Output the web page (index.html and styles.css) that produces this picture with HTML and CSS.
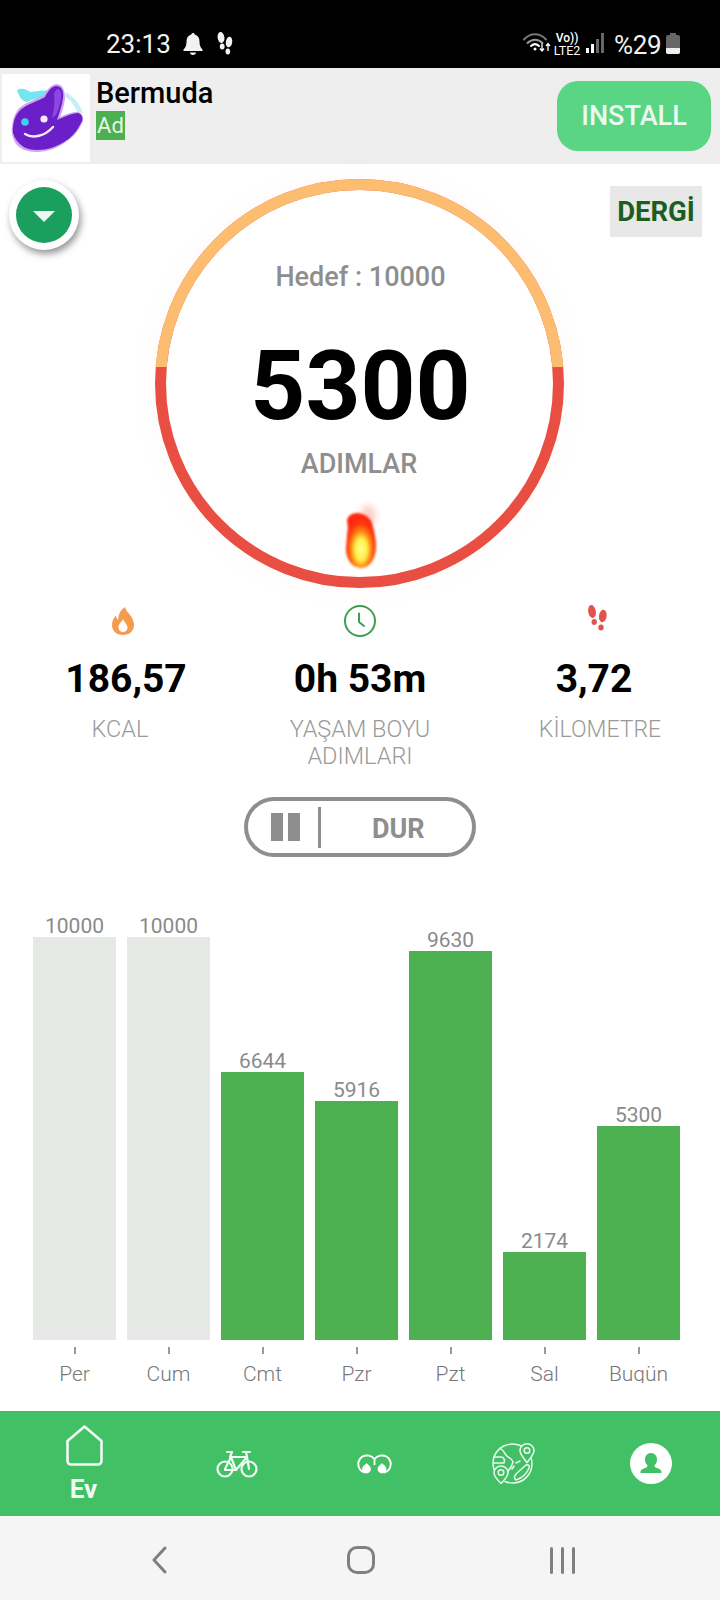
FILE: index.html
```html
<!DOCTYPE html>
<html lang="tr">
<head>
<meta charset="utf-8">
<title>Adımlar</title>
<link rel="stylesheet" href="styles.css">
</head>
<body>
<div class="screen">
  <header class="status">
    <span class="time">23:13</span>
    <svg class="st-bell" width="20" height="22" viewBox="0 0 20 22"><path fill="#f2f2f2" d="M10 0c1 0 1.600.7 1.700 1.600C15 2.400 16.500 5 16.500 8.500c0 4 1 6 3 8v1.500H.5v-1.500c2-2 3-4 3-8C3.500 5 5 2.400 8.300 1.600 8.400.7 9 0 10 0zM7 19.500h6c0 1.500-1.300 2.500-3 2.500s-3-1-3-2.500z"/></svg>
    <svg class="st-feet" width="18" height="23" viewBox="0 0 18 23"><g fill="#f2f2f2"><ellipse cx="5" cy="5.500" rx="3.400" ry="5.500" transform="rotate(-8 5 5.500)"/><ellipse cx="6.200" cy="14.500" rx="2.400" ry="3"/><ellipse cx="13" cy="10" rx="3.200" ry="5.400" transform="rotate(8 13 10)"/><ellipse cx="11.800" cy="19.500" rx="2.300" ry="3"/></g></svg>
    <div class="st-right">
      <svg width="29" height="19" viewBox="0 0 29 19"><g fill="none" stroke-linecap="round"><path d="M1 6.500C7-.5 17-.5 23 6.500" stroke="#777" stroke-width="2"/><path d="M4.500 10c4.500-4.500 10.500-4.500 15 0" stroke="#999" stroke-width="2"/><path d="M8 13c2.500-2.300 5.500-2.300 8 0" stroke="#fff" stroke-width="2"/></g><circle cx="12" cy="16" r="1.500" fill="#fff"/><path d="M19 10.500v7M17 15.500l2 2.500 2-2.500M25 18v-7M23 13l2-2.500 2 2.500" stroke="#fff" stroke-width="1.300" fill="none"/></svg>
      <div class="st-lte"><span class="st-vo">Vo))</span><span class="st-l2">LTE2</span></div>
      <div class="st-signal"><i class="sig s1"></i><i class="sig s2"></i><i class="sig s3"></i><i class="sig s4"></i></div>
      <span class="st-pct">%29</span>
      <div class="st-batt"><i class="st-cap"></i><div class="st-body"><i class="st-level"></i></div></div>
    </div>
  </header>

  <section class="ad">
    <div class="ad-logo">
      <svg width="88" height="88" viewBox="0 0 88 88">
        <path d="M15 16c6-3 9 0 14 2 6-1 14-2 19-1l-4 7c-7 0-13 1-19 4-4 0-8-5-10-12z" fill="#74e6f0"/>
        <path d="M64 18c8 5 14 12 17 21l-6-1c-2-6-6-12-12-15z" fill="#c5f0f6"/>
        <path d="M10 53C11 43 14 36 20 32 27 27 35 25 42 21 45 15 50 10 55 10c7 1 8 8 8 15-1 7-3 13-5 18 6-3 12-5 18-5 4 1 6 5 5 9-4 10-11 17-16 20C56 74 45 78 35 78 25 78 18 75 14 70 11 65 9 59 10 53z" fill="#cfa4f0"/>
        <path d="M11 53C12 44 15 38 21 34 28 29 36 27 43 23 46 17 50 12 54 12 60 12 62 18 61 24 60 32 57 40 55 46 62 43 70 39 76 39 80 40 81 44 80 47 76 56 70 63 65 66 55 73 45 76 35 76 26 76 20 73 16 68 12 63 10 58 11 53z" fill="#6a1fc9"/>
        <path d="M52 20c1-3 2-5 4-5 3 1 4 5 3 10-1 6-3 11-5 16l-4 3c2-8 3-16 2-24z" fill="#8b47e0"/>
        <circle cx="23" cy="48" r="3.800" fill="#3fd0ee"/>
        <circle cx="42" cy="45" r="3.600" fill="#f6e9fb"/>
        <path d="M23 60c8 5 20 2 28-7" fill="none" stroke="#f6e9fb" stroke-width="2.400" stroke-linecap="round"/>
      </svg>
    </div>
    <div class="ad-text">
      <div class="ad-name">Bermuda</div>
      <div class="ad-badge">Ad</div>
    </div>
    <div class="ad-btn">INSTALL</div>
  </section>

  <main class="main">
    <button class="fab"><span class="fab-inner"><i class="fab-tri"></i></span></button>
    <div class="dergi">DERGİ</div>

    <div class="gauge">
      <svg class="ring" width="409" height="409" viewBox="0 0 409 409">
        <defs>
          <clipPath id="topcut"><rect x="0" y="0" width="409" height="188"/></clipPath>
          <radialGradient id="fire" cx="50%" cy="66%" r="58%">
            <stop offset="0" stop-color="#ffff8c"/>
            <stop offset=".34" stop-color="#fff04a"/>
            <stop offset=".56" stop-color="#ff8a14"/>
            <stop offset=".8" stop-color="#ff3a0a"/>
            <stop offset="1" stop-color="#ff2a08"/>
          </radialGradient>
          <filter id="soft" x="-30%" y="-30%" width="160%" height="160%"><feGaussianBlur stdDeviation="1"/></filter>
          <filter id="softer" x="-50%" y="-50%" width="200%" height="200%"><feGaussianBlur stdDeviation="3"/></filter>
        </defs>
        <circle cx="204.500" cy="204.500" r="199" fill="#fff" stroke="#e84f42" stroke-width="11"/>
        <circle cx="204.500" cy="204.500" r="199" fill="none" stroke="#fdbd70" stroke-width="11" clip-path="url(#topcut)"/>
        <ellipse cx="213" cy="337" rx="8" ry="11" fill="#ffb0a0" opacity=".6" filter="url(#softer)"/>
        <path d="M192 356c1-5 1-9 0-14 0-4 4-8 10-8 6 0 13 4 15 10 2 7 4 15 4 23 0 14-7 22-15 22-9 0-15-9-15-19 0-5 1-9 1-14z" fill="url(#fire)" filter="url(#soft)"/>
      </svg>
      <div class="gauge-text">
        <div class="goal">Hedef : 10000</div>
        <div class="count">5300</div>
        <div class="unit">ADIMLAR</div>
      </div>
    </div>

    <div class="stats">
      <div class="stat">
        <div class="stat-icon shift-a">
          <svg width="22" height="28" viewBox="0 0 22 28"><path fill="#f59b50" fill-rule="evenodd" d="M13 0c1 4 3 5 5 8 2.500 3 4 6 4 10 0 6-4.500 10-11 10S0 24 0 18c0-4 1.500-7 4-9.500.2 2.300 1 3.500 2.300 4.300C6 8 8.500 3 13 0zM11 12c-.5 2.500-4.500 4-4.500 8.500 0 2.500 2 4.500 4.500 4.500s4.500-2 4.500-4.500c0-3.500-3.500-5-4.500-8.500z"/></svg>
        </div>
        <div class="stat-val shift-b">186,57</div>
        <div class="stat-lbl">KCAL</div>
      </div>
      <div class="stat">
        <div class="stat-icon">
          <svg width="32" height="32" viewBox="0 0 32 32"><circle cx="16" cy="16" r="15" fill="none" stroke="#3c9f4e" stroke-width="2"/><path d="M15 8.500v8.500l5 4" fill="none" stroke="#3c9f4e" stroke-width="2" stroke-linecap="round" stroke-linejoin="round"/></svg>
        </div>
        <div class="stat-val">0h 53m</div>
        <div class="stat-lbl">YAŞAM BOYU ADIMLARI</div>
      </div>
      <div class="stat">
        <div class="stat-icon shift-c">
          <svg width="19" height="26" viewBox="0 0 19 26"><g fill="#e2544b"><ellipse cx="4" cy="6.500" rx="3.800" ry="6.500" transform="rotate(-10 4 6.500)"/><ellipse cx="6.200" cy="17" rx="2.700" ry="3"/><ellipse cx="14.800" cy="11" rx="3.800" ry="6.200" transform="rotate(8 14.800 11)"/><ellipse cx="13" cy="22.500" rx="2.700" ry="3"/></g></svg>
        </div>
        <div class="stat-val shift-d">3,72</div>
        <div class="stat-lbl stat-lbl-km">KİLOMETRE</div>
      </div>
    </div>

    <div class="pill">
      <i class="pause p1"></i><i class="pause p2"></i>
      <i class="pill-div"></i>
      <span class="pill-text">DUR</span>
    </div>

    <div class="chart">
      <div class="col"><div class="plot"><span class="bar-val">10000</span><div class="bar bar-off" style="height:404px"></div></div><i class="tick"></i><div class="day">Per</div></div>
      <div class="col"><div class="plot"><span class="bar-val">10000</span><div class="bar bar-off" style="height:404px"></div></div><i class="tick"></i><div class="day">Cum</div></div>
      <div class="col"><div class="plot"><span class="bar-val">6644</span><div class="bar" style="height:268px"></div></div><i class="tick"></i><div class="day">Cmt</div></div>
      <div class="col"><div class="plot"><span class="bar-val">5916</span><div class="bar" style="height:239px"></div></div><i class="tick"></i><div class="day">Pzr</div></div>
      <div class="col"><div class="plot"><span class="bar-val">9630</span><div class="bar" style="height:389px"></div></div><i class="tick"></i><div class="day">Pzt</div></div>
      <div class="col"><div class="plot"><span class="bar-val">2174</span><div class="bar" style="height:88px"></div></div><i class="tick"></i><div class="day">Sal</div></div>
      <div class="col"><div class="plot"><span class="bar-val">5300</span><div class="bar" style="height:214px"></div></div><i class="tick"></i><div class="day day-cut">Bugün</div></div>
    </div>
  </main>

  <nav class="tabs">
    <div class="tab tab-home">
      <svg width="37" height="41" viewBox="0 0 37 41"><path d="M18.500 1.500 35.500 16v20c0 2-1.500 3.500-3.500 3.500H5c-2 0-3.500-1.500-3.500-3.500V16z" fill="none" stroke="#f2fbf4" stroke-width="2.600" stroke-linejoin="round"/></svg>
      <span class="tab-label">Ev</span>
    </div>
    <svg class="tab tab-bike" width="42" height="28" viewBox="0 0 42 28"><g fill="none" stroke="#f0faf2" stroke-width="2.200" stroke-linecap="round" stroke-linejoin="round"><circle cx="9" cy="19" r="7.500"/><circle cx="33" cy="19" r="7.500"/><path d="M9 19 15 7h16l2 12M31 7 20 20H9M15 7l5 13M11 2h5l-2 5M27 2h7M30 2l1 5"/></g></svg>
    <svg class="tab tab-binoc" width="35" height="20" viewBox="0 0 35 20"><g fill="none" stroke="#fff" stroke-width="1.900"><path d="M17.500 5C14.500 1.500 9.500.5 5.500 2.500 1 5 0 11 3 15.500c1.200 1.800 3 2.800 5 3"/><path d="M17.500 5c3-3.500 8-4.500 12-2.500C34 5 35 11 32 15.500c-1.200 1.800-3 2.800-5 3"/><path d="M17.500 5v6"/></g><circle cx="9.500" cy="15" r="4.400" fill="#fff"/><circle cx="25" cy="15" r="4.400" fill="#fff"/><path d="M9.500 9l2.500 3h-5zM25 9l2.500 3h-5z" fill="#fff"/></svg>
    <svg class="tab tab-globe" width="43" height="41" viewBox="0 0 43 41"><g fill="none" stroke="#eaf8ee" stroke-width="1.500" stroke-linejoin="round" stroke-linecap="round"><path d="M29 2.800C26 1.400 23.500 1 20.500 1 9.500 1 1 9.500 1 20.500c0 3 .6 5 1.500 7M13 38.500c2.500 1.100 5 1.500 7.500 1.500C31.500 40 40 31.500 40 20.500c0-3-.6-5.500-1.500-7.500"/><path d="M8 5c3 2 4 4 6 7 2 3 6 3 7 7l-2 5-5 7M2 14h7c3 0 4 3 3 6H1.500M24 20l4-2M20 26l2-3M24 37c-3-2-1-5 1-7l9-8c2-1 4 1 3 3-2 5-7 10-13 12z"/><path d="M35 0.800c3.800 0 7 3 7 6.800 0 4-3.500 7.400-7 12-3.500-4.600-7-8-7-12 0-3.800 3.200-6.800 7-6.800z" fill="#42c065"/><circle cx="35" cy="7.500" r="2.800"/><path d="M9 23c3.800 0 7 3 7 6.800 0 4-3.500 6.900-7 10.700-3.500-3.800-7-6.700-7-10.700C2 26 5.200 23 9 23z" fill="#42c065"/><circle cx="9" cy="29.500" r="2.800"/></g></svg>
    <svg class="tab tab-user" width="42" height="41" viewBox="0 0 42 41"><ellipse cx="21" cy="20.500" rx="21" ry="20.500" fill="#fff"/><path d="M21 10c3.800 0 6 3 6 6.500 0 2.500-1 4.500-2.500 6 0 1.500 1 2 3 2.800 2.500 1 4 1.500 4 4.700H10.500c0-3.200 1.500-3.700 4-4.700 2-.8 3-1.300 3-2.800C16 21 15 19 15 16.500 15 13 17.200 10 21 10z" fill="#42c065"/></svg>
  </nav>

  <footer class="sysbar">
    <svg class="sys-back" width="16" height="28" viewBox="0 0 16 28"><path d="M14 2 3 14l11 12" fill="none" stroke="#808080" stroke-width="3" stroke-linecap="round" stroke-linejoin="round"/></svg>
    <i class="sys-home"></i>
    <div class="sys-recent"><i></i><i></i><i></i></div>
  </footer>
</div>
</body>
</html>
```

FILE: styles.css
```css
* { box-sizing: border-box; }
html, body { margin: 0; padding: 0; background: #fff; }
body { font-family: Roboto, "Liberation Sans", sans-serif; }
i { display: block; }
.screen { width: 720px; height: 1600px; display: flex; flex-direction: column; overflow: hidden; }

/* status bar */
.status { height: 68px; flex: none; background: #000; color: #f2f2f2; display: flex; align-items: flex-start; padding: 0 0 0 106px; }
.time { font-size: 26px; line-height: 30px; margin-top: 29px; width: 65px; }
.st-bell { margin: 33px 0 0 12px; }
.st-feet { margin: 32px 0 0 13px; }
.st-right { margin-left: auto; display: flex; align-items: flex-start; padding: 33px 40px 0 0; }
.st-right > svg { margin-right: 1px; }
.st-lte { display: flex; flex-direction: column; align-items: center; width: 28px; color: #fff; }
.st-vo { font-size: 12px; line-height: 11px; font-weight: 500; }
.st-l2 { font-size: 12.500px; line-height: 11px; margin-top: 1px; }
.st-signal { display: flex; align-items: flex-end; gap: 2.500px; height: 20px; margin-left: 5px; width: 18px; }
.sig { width: 2.500px; background: #fff; }
.s1 { height: 5px; }
.s2 { height: 9px; }
.s3 { height: 14px; background: #666; }
.s4 { height: 20px; background: #666; }
.st-pct { font-size: 26px; line-height: 24px; margin-left: 10px; width: 48px; letter-spacing: -.3px; }
.st-batt { margin-left: 4px; width: 14px; display: flex; flex-direction: column; align-items: center; }
.st-cap { width: 6px; height: 2px; background: #666; }
.st-body { width: 14px; height: 19px; background: #666; border-radius: 2px; display: flex; flex-direction: column; justify-content: flex-end; overflow: hidden; }
.st-level { height: 6px; background: #eee; }

/* ad */
.ad { height: 96px; flex: none; background: #eee; display: flex; align-items: flex-start; padding: 6px 9px 0 2px; }
.ad-logo { width: 88px; height: 88px; background: #fff; flex: none; }
.ad-logo svg { display: block; }
.ad-text { margin-left: 6px; padding-top: 3px; }
.ad-name { font-size: 29px; line-height: 32px; font-weight: 500; color: #000; }
.ad-badge { width: 29px; height: 29px; margin-top: 2px; background: #4caf50; color: #e8f6e8; font-size: 22px; line-height: 29px; text-align: center; }
.ad-btn { margin: 7px 0 0 auto; width: 154px; height: 70px; border-radius: 21px; background: #5ad584; color: #eafaf0; font-size: 27px; font-weight: 500; display: flex; align-items: center; justify-content: center; }

/* main */
.main { flex: 1; position: relative; background: #fff; }
.fab { position: absolute; left: 9px; top: 16px; width: 70px; height: 70px; padding: 7px; border: 0; border-radius: 50%; background: #fff; box-shadow: 2px 4px 7px rgba(0,0,0,.42); }
.fab-inner { display: flex; align-items: center; justify-content: center; width: 56px; height: 56px; border-radius: 50%; background: #1a9f5f; }
.fab-tri { width: 0; height: 0; border-left: 11px solid transparent; border-right: 11px solid transparent; border-top: 11px solid #eef8f2; margin-top: 2px; }
.dergi { position: absolute; right: 18px; top: 22px; width: 92px; height: 51px; background: #e8e8e8; color: #1b5e20; font-size: 27.500px; font-weight: 700; display: flex; align-items: center; justify-content: center; }

.gauge { position: relative; width: 409px; height: 409px; margin: 15px 0 0 155px; border-radius: 50%; box-shadow: 0 0 22px rgba(250,190,170,.1); }
.ring { display: block; }
.gauge-text { position: absolute; inset: 0; display: flex; flex-direction: column; align-items: center; padding-top: 82px; }
.goal { font-size: 27px; line-height: 32px; font-weight: 500; color: #8e8e8e; margin-left: 2px; }
.count { font-size: 96px; line-height: 100px; font-weight: 700; color: #000; margin-top: 43px; margin-left: 2px; }
.unit { font-size: 27px; line-height: 30px; font-weight: 500; color: #8e8e8e; margin-top: 13px; margin-left: -1px; }

.stats { display: flex; margin-top: 17px; height: 165px; }
.stat { width: 240px; display: flex; flex-direction: column; align-items: center; }
.stat-icon { height: 32px; display: flex; align-items: flex-start; }
.stat-icon svg { display: block; }
.shift-a { margin: 2px 0 -2px 6px; }
.shift-c { margin-left: -6px; }
.shift-b { margin-left: 12px; }
.shift-d { margin-right: 12px; }
.stat-val { font-size: 39px; line-height: 44px; font-weight: 700; color: #000; margin-top: 20px; }
.stat-lbl { font-size: 23.500px; line-height: 27px; font-weight: 300; color: #9a9a9a; margin-top: 15px; text-align: center; width: 170px; }
.stat-lbl-km { font-size: 23px; }

.pill { width: 232px; height: 60px; margin: 27px 0 0 244px; border: 4px solid #8e8e8e; border-radius: 30px; display: flex; align-items: center; padding-left: 23px; }
.pause { height: 28px; background: #8e8e8e; }
.p1 { width: 12px; }
.p2 { width: 12px; margin-left: 5px; }
.pill-div { width: 3px; height: 41px; background: #8e8e8e; margin-left: 18px; }
.pill-text { font-size: 27px; font-weight: 700; color: #8e8e8e; margin: 3px 0 0 51px; }

/* chart */
.chart { display: flex; gap: 11px; margin: 59px 0 0 33px; }
.col { width: 83px; display: flex; flex-direction: column; align-items: center; }
.plot { width: 83px; height: 424px; display: flex; flex-direction: column; justify-content: flex-end; align-items: center; }
.bar-val { font-size: 21px; line-height: 20px; font-weight: 400; color: #8a8a8a; margin-bottom: 1px; }
.bar { width: 83px; background: #4caf50; }
.bar-off { background: #e6e8e6; }
.tick { width: 2px; height: 7px; background: #999; margin-top: 7px; }
.day { margin-top: 8px; font-size: 21px; line-height: 24px; font-weight: 300; color: #777; white-space: nowrap; }
.day-cut { height: 21px; overflow: hidden; }

/* bottom tabs */
.tabs { height: 105px; flex: none; background: #42c065; display: flex; align-items: center; padding-left: 66px; }
.tab { flex: none; display: block; }
.tab-home { display: flex; flex-direction: column; align-items: center; width: 37px; }
.tab-home svg { display: block; }
.tab-label { font-size: 26px; line-height: 26px; font-weight: 700; color: #f2fbf4; margin: 10px 2px 0 0; }
.tab-bike { margin-left: 113px; }
.tab-binoc { margin-left: 99px; }
.tab-globe { margin-left: 100px; }
.tab-user { margin-left: 95px; }

/* system bar */
.sysbar { height: 84px; flex: none; background: #f5f5f5; display: flex; align-items: flex-start; padding: 30px 0 0 151px; }
.sys-back { display: block; margin-top: 0; }
.sys-home { width: 28px; height: 28px; margin-left: 180px; border: 3.500px solid #808080; border-radius: 10px; }
.sys-recent { display: flex; gap: 8px; margin-left: 175px; padding-top: 1px; }
.sys-recent i { width: 3px; height: 27px; border-radius: 1.500px; background: #808080; }
```
